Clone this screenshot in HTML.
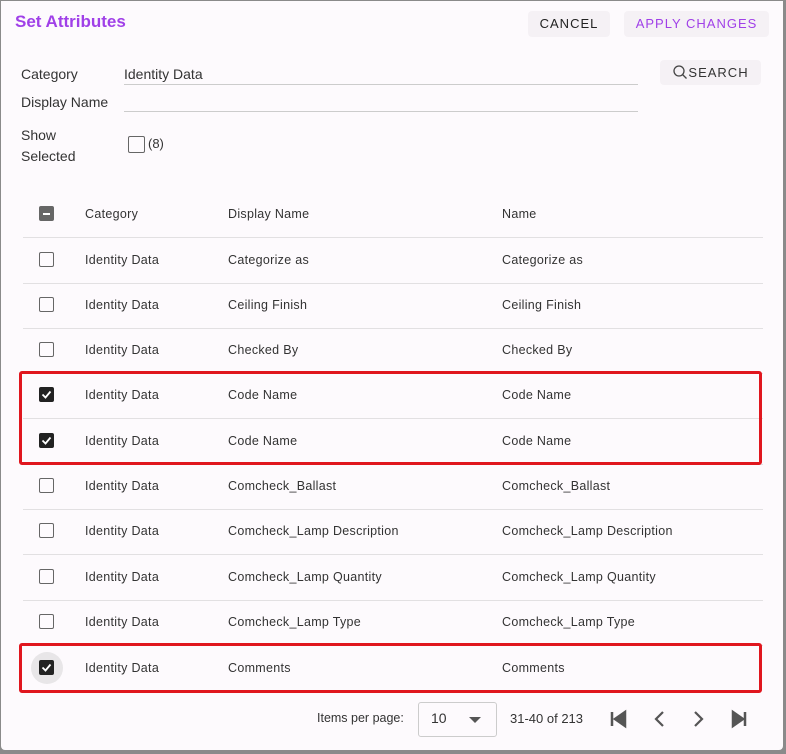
<!DOCTYPE html>
<html><head><style>
body{margin:0;width:786px;height:754px;background:#8a8a8a;font-family:"Liberation Sans",sans-serif;overflow:hidden}
.d{position:absolute;left:1px;top:1px;width:782px;height:749px;background:#fdfafd;border-radius:0 0 4px 4px}
.t{position:absolute;font-size:13px;color:#333;white-space:nowrap}
.btn{position:absolute;background:#f5f1f5;border-radius:4px;font-size:13px;letter-spacing:1px;text-align:center}
.ln{position:absolute;height:1px;background:#ccc}
.row{position:absolute;left:22px;width:740px;height:45px;border-bottom:1px solid #e2e0e2}
.row span{position:absolute;top:15px;font-size:12.5px;color:#333;letter-spacing:.3px}
.cb{position:absolute;left:16px;top:14px;width:13px;height:13px;border:1.5px solid #666;border-radius:2px}
.ck{background:#222;border-color:#222}
.red{position:absolute;border:3px solid #e0161e;border-radius:3px}
</style></head><body><div class="d">
<div class="t" style="left:14px;top:11px;font-size:17px;font-weight:bold;color:#a040e8">Set Attributes</div>
<div class="btn" style="left:527px;top:10px;width:82px;height:26px;line-height:26px;color:#222">CANCEL</div>
<div class="btn" style="left:623px;top:10px;width:145px;height:26px;line-height:26px;color:#a040e8">APPLY CHANGES</div>
<div class="btn" style="left:659px;top:59px;width:101px;height:25px;line-height:25px;color:#333"><svg width="16" height="16" viewBox="0 0 16 16" style="vertical-align:-3px"><circle cx="7" cy="7" r="5" fill="none" stroke="#444" stroke-width="1.3"/><path d="M10.5 10.5L14.5 14.5" stroke="#444" stroke-width="1.3"/></svg>SEARCH</div>
<div class="t" style="left:20px;top:65px;font-size:14px">Category</div>
<div class="t" style="left:123px;top:65px;font-size:14px">Identity Data</div>
<div class="ln" style="left:123px;top:83px;width:514px"></div>
<div class="t" style="left:20px;top:93px;font-size:14px">Display Name</div>
<div class="ln" style="left:123px;top:110px;width:514px"></div>
<div class="t" style="left:20px;top:124px;font-size:14px;line-height:21px">Show<br>Selected</div>
<div style="position:absolute;left:127px;top:135px;width:15px;height:15px;border:1.5px solid #666;border-radius:2px"></div>
<div class="t" style="left:147px;top:135px;font-size:13px">(8)</div>
<div class="row" style="top:191px"><div class="cb" style="background:#666"><div style="position:absolute;left:3px;top:5.5px;width:7px;height:2px;background:#fff"></div></div><span style="left:62px">Category</span><span style="left:205px">Display Name</span><span style="left:479px">Name</span></div>
<div class="row" style="top:237px"><div class="cb"></div><span style="left:62px">Identity Data</span><span style="left:205px">Categorize as</span><span style="left:479px">Categorize as</span></div>
<div class="row" style="top:282px"><div class="cb"></div><span style="left:62px">Identity Data</span><span style="left:205px">Ceiling Finish</span><span style="left:479px">Ceiling Finish</span></div>
<div class="row" style="top:327px"><div class="cb"></div><span style="left:62px">Identity Data</span><span style="left:205px">Checked By</span><span style="left:479px">Checked By</span></div>
<div class="row" style="top:372px"><div class="cb ck"><svg width="13" height="13" style="position:absolute;left:0;top:0"><path d="M2.5 6.5L5.5 9.5L10.5 3.5" stroke="#fff" stroke-width="1.8" fill="none"/></svg></div><span style="left:62px">Identity Data</span><span style="left:205px">Code Name</span><span style="left:479px">Code Name</span></div>
<div class="row" style="top:418px"><div class="cb ck"><svg width="13" height="13" style="position:absolute;left:0;top:0"><path d="M2.5 6.5L5.5 9.5L10.5 3.5" stroke="#fff" stroke-width="1.8" fill="none"/></svg></div><span style="left:62px">Identity Data</span><span style="left:205px">Code Name</span><span style="left:479px">Code Name</span></div>
<div class="row" style="top:463px"><div class="cb"></div><span style="left:62px">Identity Data</span><span style="left:205px">Comcheck_Ballast</span><span style="left:479px">Comcheck_Ballast</span></div>
<div class="row" style="top:508px"><div class="cb"></div><span style="left:62px">Identity Data</span><span style="left:205px">Comcheck_Lamp Description</span><span style="left:479px">Comcheck_Lamp Description</span></div>
<div class="row" style="top:554px"><div class="cb"></div><span style="left:62px">Identity Data</span><span style="left:205px">Comcheck_Lamp Quantity</span><span style="left:479px">Comcheck_Lamp Quantity</span></div>
<div class="row" style="top:599px"><div class="cb"></div><span style="left:62px">Identity Data</span><span style="left:205px">Comcheck_Lamp Type</span><span style="left:479px">Comcheck_Lamp Type</span></div>
<div class="row" style="top:645px;border:none"><div style="position:absolute;left:8px;top:6px;width:32px;height:32px;border-radius:50%;background:#e8e6e8"></div><div class="cb ck"><svg width="13" height="13" style="position:absolute;left:0;top:0"><path d="M2.5 6.5L5.5 9.5L10.5 3.5" stroke="#fff" stroke-width="1.8" fill="none"/></svg></div><span style="left:62px">Identity Data</span><span style="left:205px">Comments</span><span style="left:479px">Comments</span></div>
<div class="red" style="left:18px;top:370px;width:737px;height:88px"></div>
<div class="red" style="left:18px;top:642px;width:737px;height:44px"></div>
<div class="t" style="left:316px;top:710px;font-size:12.5px">Items per page:</div>
<div style="position:absolute;left:417px;top:701px;width:77px;height:33px;border:1px solid #ccc;border-radius:3px"></div>
<div class="t" style="left:430px;top:709px;font-size:14px">10</div>
<div style="position:absolute;left:468px;top:716px;border-left:6px solid transparent;border-right:6px solid transparent;border-top:6px solid #555"></div>
<div class="t" style="left:509px;top:710px;font-size:13px">31-40 of 213</div>
<svg style="position:absolute;left:605px;top:707px" width="150" height="22" viewBox="0 0 150 22">
<path d="M6 4v14M19 4L9 11L19 18Z" stroke="#555" stroke-width="2.5" fill="#555"/>
<path d="M57 4L50 11L57 18" stroke="#555" stroke-width="2.2" fill="none"/>
<path d="M89 4L96 11L89 18" stroke="#555" stroke-width="2.2" fill="none"/>
<path d="M127 4L137 11L127 18Z M139 4v14" stroke="#555" stroke-width="2.5" fill="#555"/>
</svg>
</div></body></html>
